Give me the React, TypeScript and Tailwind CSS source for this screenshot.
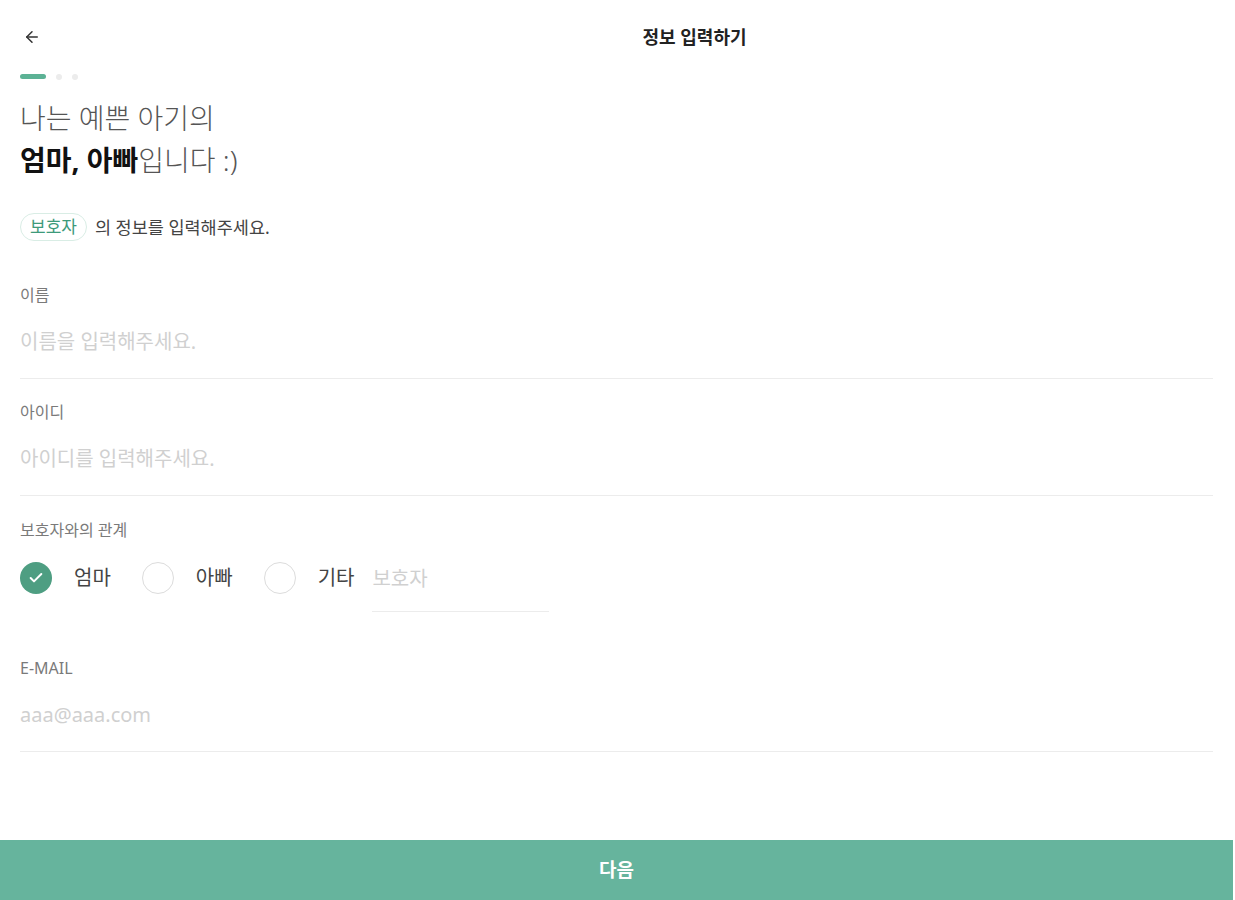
import React, { useState } from 'react'
import { ArrowLeft, Check } from 'lucide-react'

const font = { fontFamily: '"Noto Sans", "Noto Sans CJK KR", sans-serif' }

interface FieldProps {
  label: string
  placeholder: string
  className?: string
}

const Field: React.FC<FieldProps> = ({ label, placeholder, className }) => (
  <div className={`border-b border-[#ececec] ${className ?? ''}`}>
    <div className="h-[18px] text-[16px] leading-[18px] text-[#7a7a7a]">{label}</div>
    <input
      type="text"
      placeholder={placeholder}
      className="mt-[26px] mb-[24px] block h-[24px] w-full bg-transparent text-[20px] leading-[24px] text-[#333] placeholder-[#d0d0d0] outline-none"
    />
  </div>
)

const App: React.FC = () => {
  const [relation, setRelation] = useState('mom')

  const options = [
    { id: 'mom', label: '엄마' },
    { id: 'dad', label: '아빠' },
    { id: 'etc', label: '기타' },
  ]

  return (
    <div className="min-h-screen w-full bg-white flex flex-col" style={font}>
      <div className="pl-5 pr-[22px]">
        {/* 헤더 */}
        <div className="pt-[25px] h-[49px] flex items-center">
          <button className="w-6 h-6 flex items-center justify-center">
            <ArrowLeft className="w-[18px] h-[18px] text-[#333]" strokeWidth={2} />
          </button>
          <div className="flex-1 text-center pl-[156px] text-[18px] font-bold text-[#222]">정보 입력하기</div>
          <div className="w-6" />
        </div>

        {/* 진행 표시 */}
        <div className="mt-[25px] h-[5px] flex items-center gap-[10px]">
          <div className="w-[26px] h-[5px] rounded-full bg-[#5cb295]"></div>
          <div className="w-[6px] h-[6px] rounded-full bg-[#ececec]"></div>
          <div className="w-[6px] h-[6px] rounded-full bg-[#ececec]"></div>
        </div>

        {/* 타이틀 */}
        <div className="mt-[18px] text-[28px] leading-[42px] text-[#555] font-light">
          <p>나는 예쁜 아기의</p>
          <p>
            <span className="font-bold text-[#111]">엄마, 아빠</span>입니다 :)
          </p>
        </div>

        {/* 안내 */}
        <div className="mt-[32px] flex items-center">
          <span className="h-[28px] px-[9px] flex items-center rounded-full border border-[#d9ede5] text-[17px] text-[#3d9a7a]">
            보호자
          </span>
          <span className="ml-[8px] text-[17.5px] text-[#444]">의 정보를 입력해주세요.</span>
        </div>

        <Field label="이름" placeholder="이름을 입력해주세요." className="mt-[45px]" />
        <Field label="아이디" placeholder="아이디를 입력해주세요." className="mt-[24px]" />

        {/* 관계 */}
        <div className="mt-[25px]">
          <div className="h-[18px] text-[16px] leading-[18px] text-[#7a7a7a]">보호자와의 관계</div>
          <div className="mt-[23px] flex items-center">
            {options.map((o, i) => (
              <button
                key={o.id}
                onClick={() => setRelation(o.id)}
                className={`flex items-center ${i < options.length - 1 ? 'mr-[31px]' : ''}`}
              >
                {relation === o.id ? (
                  <span className="w-8 h-8 rounded-full bg-[#4e9e82] flex items-center justify-center">
                    <Check className="w-[16px] h-[16px] text-white" strokeWidth={3} />
                  </span>
                ) : (
                  <span className="w-8 h-8 rounded-full border-[1.5px] border-[#dcdcdc]"></span>
                )}
                <span className="ml-[22px] text-[20px] text-[#444]">{o.label}</span>
              </button>
            ))}
            <div className="ml-[18px] relative">
              <input
                type="text"
                placeholder="보호자"
                className="w-[177px] h-[32px] text-[20px] bg-transparent outline-none placeholder-[#d0d0d0]"
              />
              <div className="absolute left-0 top-[49px] w-[177px] h-px bg-[#ececec]"></div>
            </div>
          </div>
        </div>

        <Field label="E-MAIL" placeholder="aaa@aaa.com" className="mt-[65px]" />
      </div>

      {/* 다음 버튼 */}
      <button className="mt-auto mr-[2px] h-[60px] bg-[#66b49d] text-white text-[19px] font-bold">다음</button>
    </div>
  )
}

export default App
